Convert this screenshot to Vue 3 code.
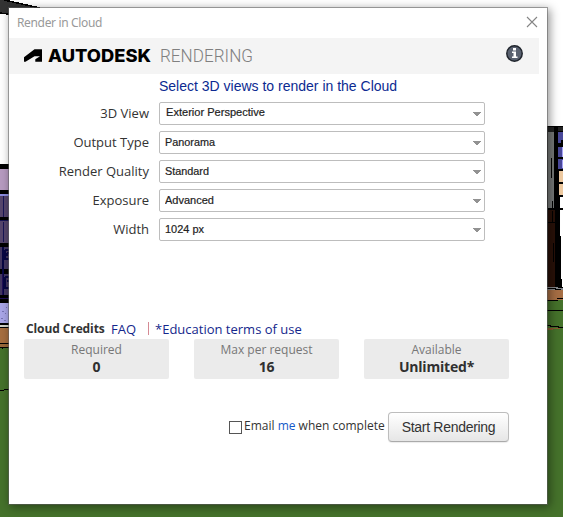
<script setup>
import { ref } from 'vue'

const fields = [
  { label: '3D View', value: 'Exterior Perspective', w: 99 },
  { label: 'Output Type', value: 'Panorama', w: 50 },
  { label: 'Render Quality', value: 'Standard', w: 44 },
  { label: 'Exposure', value: 'Advanced', w: 49 },
  { label: 'Width', value: '1024 px', w: 39 },
]
const credits = [
  { label: 'Required', value: '0' },
  { label: 'Max per request', value: '16' },
  { label: 'Available', value: 'Unlimited*' },
]
const emailMe = ref(false)
</script>

<template>
  <main class="stage">
    <svg class="scene" width="563" height="517" viewBox="0 0 563 517" shape-rendering="crispEdges" aria-hidden="true">
      <rect width="563" height="517" fill="#fff" />
      <rect y="346" width="563" height="171" fill="#45722b" />
      <path d="M0 0H4L40 8L8 15L0 13Z" fill="#333" />
      <path d="M4 0L40 8M0 13L8 14" stroke="#000" stroke-width="1.5" />
      <rect y="164" width="9" height="183" fill="#000" />
      <rect y="169" width="9" height="21" fill="#b79bc0" />
      <rect y="195" width="9" height="22" fill="#55456c" />
      <rect y="194" width="9" height="2" fill="#8c8ce0" />
      <rect y="221" width="9" height="22" fill="#55456c" />
      <path d="M0 220H9M3 196V217M3 222V242" stroke="#171454" />
      <rect y="247" width="9" height="22" fill="#433761" />
      <rect y="274" width="9" height="21" fill="#433761" />
      <path d="M3 247V295M5 250H9M5 250V259H9M7 253H9M7 253V256M5 277H9M5 277V288H9M7 281H9" stroke="#080744" stroke-width="1.5" fill="none" />
      <path d="M2 274V295M0 298H9" stroke="#211058" />
      <rect y="303" width="9" height="20" fill="#a9a6e8" />
      <path d="M2 311h2M5 313h1M1 318h2M4 320h2M6 307h1" stroke="#7774b5" />
      <rect y="325" width="9" height="2" fill="#d5d5ca" />
      <rect y="328" width="9" height="15" fill="#a66e3f" />
      <rect y="344" width="9" height="3" fill="#9a693a" />
      <path d="M0 347.5H9M2 348.5h1M0 390.5H4M4 389.5H9" stroke="#000" />
      <rect x="547" y="126" width="16" height="163" fill="#000" />
      <rect x="548" y="127" width="6" height="5" fill="#222" />
      <rect x="558" y="127" width="5" height="4" fill="#222" />
      <rect x="548" y="132" width="6" height="76" fill="#777a79" />
      <path d="M551.5 158V178M552.5 201V208" stroke="#000" />
      <rect x="548" y="210" width="7" height="77" fill="#291108" />
      <path d="M548 222H556M552.5 211V222M553.5 243V262" stroke="#000" />
      <path d="M558 132h5v8h-2v3h-3zM558 147h4v10h-4zM558 159h5v10h-5z" fill="#49489a" />
      <path d="M562.5 147v10M562.5 160v8" stroke="#a5a2f3" />
      <rect x="559" y="171" width="4" height="11" fill="#edc9a0" />
      <rect x="559" y="184" width="4" height="11" fill="#edc9a0" />
      <rect x="560" y="197" width="3" height="11" fill="#fff" />
      <path d="M560 210h3v77h-1v-8h-1v-43h-1z" fill="#fff" />
      <rect x="547" y="287" width="16" height="3" fill="#84868b" />
      <path d="M547 288.5H556M558 287.5H563M555 289.5H561" stroke="#000" />
      <rect x="547" y="290" width="16" height="10" fill="#a66e44" />
      <rect x="547" y="300" width="16" height="47" fill="#45722b" />
      <path d="M547 300.500H558M557 298.500H563M547 310.500H563M547 325.500H551M550 326.500H559M558 327.500H563" stroke="#000" />
      <path d="M547 328.500H560M547 329.500H553" stroke="#8a5a30" />
    </svg>

    <section class="dialog">
      <header class="titlebar">
        <span class="title">Render in Cloud</span>
        <svg class="close" width="12" height="12" viewBox="0 0 12 12"><path d="M1 1L11 11M11 1L1 11" stroke="#858585" stroke-width="1.1" /></svg>
      </header>

      <div class="brandbar">
        <svg width="240" height="24" viewBox="0 0 240 24" class="brand">
          <path d="M0 19.800V15.300L10.500 7.300H18V19.800H11.300V17.300L16 14.300H10.500L1.500 19.800Z" fill="#000" />
          <text x="24" y="19.800" class="brand-name" textLength="103" lengthAdjust="spacingAndGlyphs">AUTODESK</text>
          <text x="136" y="19.800" class="brand-product" textLength="93" lengthAdjust="spacingAndGlyphs">RENDERING</text>
        </svg>
        <svg class="info" width="18" height="18" viewBox="0 0 18 18">
          <circle cx="8.500" cy="9.500" r="7.700" fill="#596170" stroke="#20252d" stroke-width="1.500" />
          <path d="M7 4h3v2.500H7zM6 7.500h4v5h1.500V14H6v-1.500h1.500V9H6z" fill="#fff" />
        </svg>
      </div>

      <h1 class="heading">Select 3D views to render in the Cloud</h1>

      <div class="form">
        <div v-for="(f, i) in fields" :key="f.label" class="row">
          <label>{{ f.label }}</label>
          <div class="select" :class="{ first: i === 0 }">
            <svg class="value" width="110" height="16"><text x="0" y="12" :textLength="f.w" lengthAdjust="spacingAndGlyphs">{{ f.value }}</text></svg>
            <svg width="8" height="4" viewBox="0 0 8 4" shape-rendering="crispEdges"><path d="M0 0H8V1H7V2H6V3H5V4H3V3H2V2H1V1H0Z" fill="#929292" /></svg>
          </div>
        </div>
      </div>

      <div class="terms">
        <b>Cloud Credits</b>
        <a class="faq">FAQ</a>
        <i class="bar"></i>
        <a class="edu">*Education terms of use</a>
      </div>

      <div class="credits">
        <div v-for="c in credits" :key="c.label" class="credit">
          <span>{{ c.label }}</span>
          <strong>{{ c.value }}</strong>
        </div>
      </div>

      <footer class="actions">
        <input v-model="emailMe" type="checkbox" class="check" />
        <span class="email">Email <a>me</a> when complete</span>
        <button class="start">Start Rendering</button>
      </footer>
    </section>
  </main>
</template>

<style>
body { margin: 0; overflow: hidden; }
</style>

<style scoped>
* { box-sizing: border-box; }
.stage {
  position: relative;
  width: 563px;
  height: 517px;
  padding: 7px 0 0 8px;
  overflow: hidden;
  font-family: "Open Sans", "Noto Sans", sans-serif;
  color: #333;
}
.scene { position: absolute; left: 0; top: 0; }
.dialog {
  position: relative;
  width: 540px;
  height: 498px;
  background: #fff;
  border: 1px solid rgba(95, 95, 95, 0.55);
  background-clip: padding-box;
  box-shadow: 2px 2px 9px rgba(0, 0, 0, 0.42);
}
.titlebar {
  height: 30px;
  padding: 0 9px 0 8px;
  display: flex;
  align-items: center;
  justify-content: space-between;
}
.title { font-family: "Noto Sans", sans-serif; font-size: 12px; line-height: 16px; color: #999; letter-spacing: -0.35px; }
.close { margin-top: -2px; }
.brandbar {
  width: 530px;
  height: 36px;
  padding: 0 15px;
  display: flex;
  justify-content: space-between;
  background: #f4f4f4;
}
.brand { margin-top: 4px; }
.brand-name { font: 800 17.200px Inter, sans-serif; fill: #000; }
.brand-product { font: 300 18px Roboto, sans-serif; fill: #808080; }
.info { margin-top: 6px; }
.heading {
  margin: 2px 0 0 150px;
  height: 20px;
  font: 400 14px/20px "Liberation Sans", Arial, sans-serif;
  color: #0c2a91;
  white-space: nowrap;
}
.form {
  padding-top: 6px;
  display: flex;
  flex-direction: column;
  gap: 6px;
}
.row { display: flex; align-items: center; height: 23px; }
.row label { width: 140px; margin-right: 10px; padding-bottom: 2px; text-align: right; font-size: 13px; line-height: 20px; }
.select {
  width: 326px;
  height: 23px;
  padding: 0 3px 0 5px;
  display: flex;
  align-items: center;
  justify-content: space-between;
  border: 1px solid #bdbdbd;
  border-radius: 2px;
}
.select.first { padding-left: 6px; }
.value { margin-top: -1px; }
.select.first .value { margin-top: -3px; }
.value text { font: 11px "Liberation Sans", Arial, sans-serif; fill: #222; stroke: #222; stroke-width: 0.2px; }
.terms {
  margin-top: 78px;
  padding-left: 17px;
  height: 19px;
  display: flex;
  align-items: center;
  font-size: 13px;
  line-height: 18px;
  white-space: nowrap;
}
.terms b { width: 85px; font-size: 12px; letter-spacing: -0.1px; }
.terms a { color: #14278c; }
.faq { width: 37px; font-size: 13px; }
.bar { width: 1px; height: 13px; background: #d58a94; margin-right: 6px; }
.edu { font-size: 13px; }
.credits { margin: 1px 0 0 15px; display: flex; gap: 25px; }
.credit {
  width: 145px;
  height: 40px;
  padding-top: 2px;
  display: flex;
  flex-direction: column;
  align-items: center;
  background: #ebebeb;
  border-radius: 2px;
}
.credit span { font-size: 12px; line-height: 17px; color: #777; }
.credit strong { font-size: 14px; line-height: 18px; color: #303030; letter-spacing: -0.2px; }
.actions {
  width: 500px;
  height: 30px;
  margin-top: 33px;
  display: flex;
  justify-content: flex-end;
}
.check {
  appearance: none;
  width: 13px;
  height: 13px;
  margin: 9px 2px 0 0;
  border: 1px solid #555;
  background: #fff;
}
.email { width: 144px; padding-top: 5px; font-size: 12px; line-height: 18px; white-space: nowrap; }
.email a { color: #1458c8; }
.start {
  width: 121px;
  height: 30px;
  margin: 0;
  padding: 0;
  border: 1px solid #bdbdbd;
  border-bottom-color: #aaa;
  border-radius: 4px;
  background: linear-gradient(#fff, #e6e6e6);
  box-shadow: 0 1px 1px rgba(0, 0, 0, 0.08);
  font: 14px/20px "Liberation Sans", Arial, sans-serif;
  letter-spacing: -0.3px;
  white-space: nowrap;
  color: #333;
}
</style>
